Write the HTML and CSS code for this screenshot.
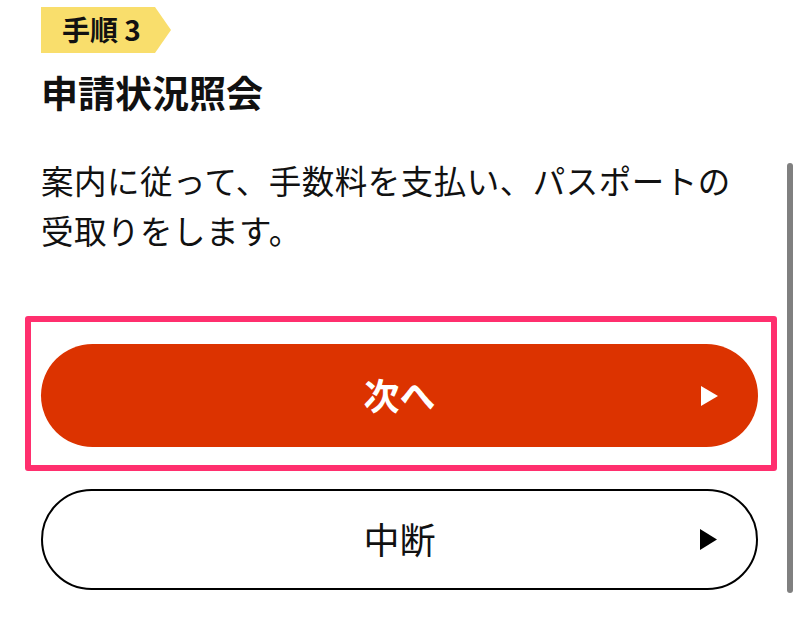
FILE: index.html
```html
<!DOCTYPE html>
<html lang="ja">
<head>
    <meta charset="UTF-8">
    <meta name="viewport" content="width=device-width, initial-scale=1.0">
    <title>申請状況照会</title>
    <link rel="stylesheet" href="styles.css">
</head>
<body>
    <div class="page">
        <div class="step-badge">手順 3</div>
        <h1 class="step-title">申請状況照会</h1>
        <p class="step-text">案内に従って、手数料を支払い、パスポートの受取りをします。</p>

        <div class="highlight">
            <a href="#" class="btn btn-primary">
                <span class="btn-label">次へ</span>
                <svg class="btn-arrow" width="17" height="20" viewBox="0 0 17 20"><path d="M0 0 L17 10 L0 20 Z" fill="#ffffff"/></svg>
            </a>
        </div>

        <a href="#" class="btn btn-outline">
            <span class="btn-label">中断</span>
            <svg class="btn-arrow" width="17" height="21" viewBox="0 0 17 21"><path d="M0 0 L17 10.5 L0 21 Z" fill="#000000"/></svg>
        </a>
    </div>
    <div class="scrollbar"></div>
</body>
</html>
```

FILE: styles.css
```css
:root {
    --text: #111111;
    --badge: #f9de6c;
    --primary: #dc3300;
    --highlight: #ff2f6e;
    --scroll: #808080;
}

body {
    margin: 0;
    font-family: "Noto Sans CJK JP", "Noto Sans", sans-serif;
    color: var(--text);
    background: #ffffff;
    overflow: hidden;
}

.page {
    padding: 7px 42px 0 41px;
}

.step-badge {
    width: 130px;
    height: 46px;
    box-sizing: border-box;
    padding-left: 21px;
    background: var(--badge);
    clip-path: polygon(0 0, 114px 0, 130px 50%, 114px 100%, 0 100%);
    font-size: 28px;
    font-weight: bold;
    line-height: 45px;
}

.step-title {
    margin: 14px 0 0;
    font-size: 37px;
    font-weight: bold;
    line-height: 50px;
}

.step-text {
    margin: 38px 0 0;
    font-size: 32.5px;
    line-height: 50px;
    letter-spacing: 0.5px;
}

.highlight {
    margin: 61px -19px 0 -16px;
    padding: 22px 13px 18px 10px;
    border: 6px solid var(--highlight);
    border-radius: 3px;
}

.btn {
    display: grid;
    grid-template-columns: 1fr auto 1fr;
    align-items: center;
    box-sizing: border-box;
    border-radius: 52px;
    text-decoration: none;
    font-size: 36px;
}

.btn-label {
    grid-column: 2;
    margin-top: -4px;
}

.btn-arrow {
    grid-column: 3;
    justify-self: end;
    margin-right: 40px;
}

.btn-primary {
    height: 103px;
    background: var(--primary);
    color: #ffffff;
    font-weight: bold;
}

.btn-outline {
    height: 101px;
    margin-top: 18px;
    border: 2px solid #000000;
    color: var(--text);
}

.btn-outline .btn-arrow {
    margin-right: 39px;
}

.scrollbar {
    position: absolute;
    top: 163px;
    left: 787px;
    width: 6px;
    height: 430px;
    border-radius: 3px;
    background: var(--scroll);
}
```
